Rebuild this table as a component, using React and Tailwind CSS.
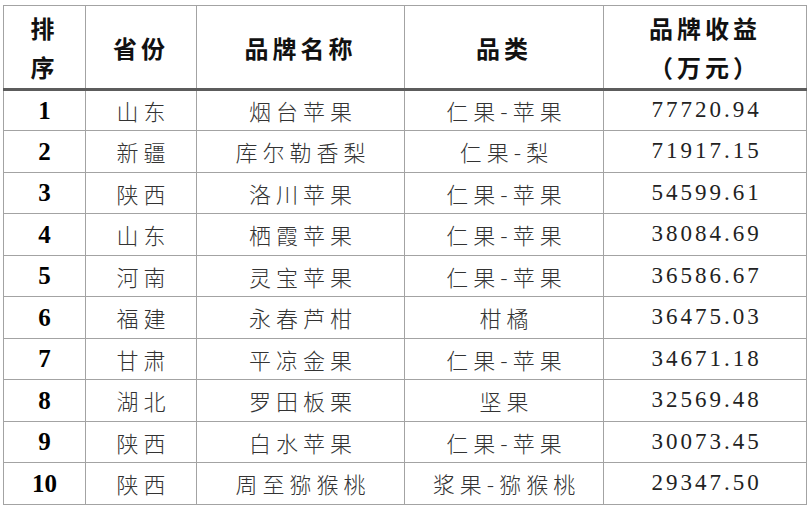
import React from "react";

const rows = [
  { rank: "1", province: "山东", brand: "烟台苹果", category: "仁果-苹果", income: "77720.94" },
  { rank: "2", province: "新疆", brand: "库尔勒香梨", category: "仁果-梨", income: "71917.15" },
  { rank: "3", province: "陕西", brand: "洛川苹果", category: "仁果-苹果", income: "54599.61" },
  { rank: "4", province: "山东", brand: "栖霞苹果", category: "仁果-苹果", income: "38084.69" },
  { rank: "5", province: "河南", brand: "灵宝苹果", category: "仁果-苹果", income: "36586.67" },
  { rank: "6", province: "福建", brand: "永春芦柑", category: "柑橘", income: "36475.03" },
  { rank: "7", province: "甘肃", brand: "平凉金果", category: "仁果-苹果", income: "34671.18" },
  { rank: "8", province: "湖北", brand: "罗田板栗", category: "坚果", income: "32569.48" },
  { rank: "9", province: "陕西", brand: "白水苹果", category: "仁果-苹果", income: "30073.45" },
  { rank: "10", province: "陕西", brand: "周至猕猴桃", category: "浆果-猕猴桃", income: "29347.50" },
];

const cjk = "font-['Noto_Sans_CJK_SC',sans-serif]";
const serif = "font-['Liberation_Serif',serif]";

const App = () => {
  return (
    <div className="w-[812px] h-[512px] bg-white pt-[5px] pl-[3px] overflow-hidden">
      <table className="table-fixed border-collapse w-[803px] border border-[#a3a3a3]">
        <colgroup>
          <col className="w-[82px]" />
          <col className="w-[111px]" />
          <col className="w-[208px]" />
          <col className="w-[199px]" />
          <col className="w-[203px]" />
        </colgroup>
        <thead>
          <tr className={`h-[84px] ${cjk} font-bold text-[24px] text-[#111] leading-[39px] tracking-[4px]`}>
            <th className="border border-[#a3a3a3] border-b-[3px] border-b-[#5c5c5c] text-center">
              排<br />序
            </th>
            <th className="border border-[#a3a3a3] border-b-[3px] border-b-[#5c5c5c] text-center">省份</th>
            <th className="border border-[#a3a3a3] border-b-[3px] border-b-[#5c5c5c] text-center">品牌名称</th>
            <th className="border border-[#a3a3a3] border-b-[3px] border-b-[#5c5c5c] text-center">品类</th>
            <th className="border border-[#a3a3a3] border-b-[3px] border-b-[#5c5c5c] text-center">
              品牌收益
              <br />
              （万元）
            </th>
          </tr>
        </thead>
        <tbody>
          {rows.map((r, i) => (
            <tr key={r.rank} className={i % 2 === 0 ? "h-[41px]" : "h-[42px]"}>
              <td className={`border border-[#a3a3a3] text-center ${serif} font-bold text-[25px] text-black`}>
                {r.rank}
              </td>
              <td className={`border border-[#a3a3a3] text-center ${cjk} font-light text-[22px] text-[#333] tracking-[5px] pl-[5px]`}>
                {r.province}
              </td>
              <td className={`border border-[#a3a3a3] text-center ${cjk} font-light text-[22px] text-[#333] tracking-[5px] pl-[5px]`}>
                {r.brand}
              </td>
              <td className={`border border-[#a3a3a3] text-center ${cjk} font-light text-[22px] text-[#333] tracking-[5px] pl-[5px]`}>
                {r.category}
              </td>
              <td className={`border border-[#a3a3a3] text-center ${serif} text-[23px] text-[#222] tracking-[3px] pl-[3px]`}>
                {r.income}
              </td>
            </tr>
          ))}
        </tbody>
      </table>
    </div>
  );
};

export default App;
